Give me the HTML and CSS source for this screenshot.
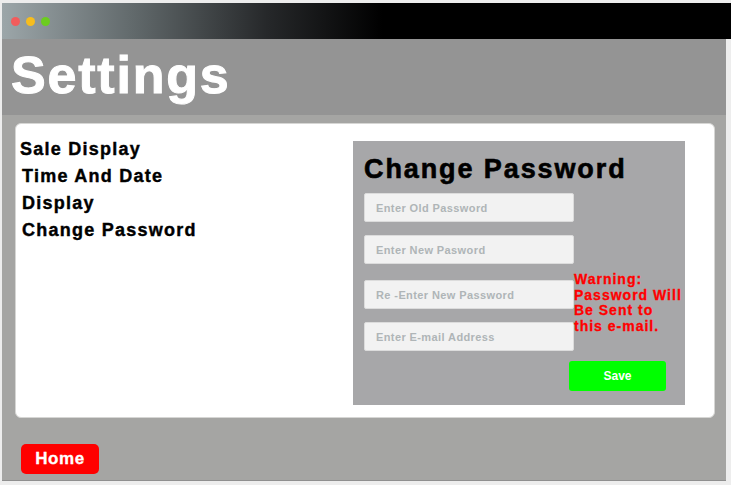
FILE: index.html
```html
<!DOCTYPE html>
<html lang="en">
<head>
<meta charset="utf-8">
<title>Settings</title>
<link rel="stylesheet" href="styles.css">
</head>
<body>
<div class="window">
  <div class="titlebar">
    <span class="dot dot-red"></span>
    <span class="dot dot-yellow"></span>
    <span class="dot dot-green"></span>
  </div>
  <div class="frame">
    <header class="header"><h1 class="title">Settings</h1></header>
    <main class="body">
      <section class="card">
        <nav class="menu">
          <a class="menu-item first">Sale Display</a>
          <a class="menu-item">Time And Date</a>
          <a class="menu-item">Display</a>
          <a class="menu-item">Change Password</a>
        </nav>
        <div class="panel">
          <h2 class="panel-title">Change Password</h2>
          <div class="form">
            <input class="field" type="password" placeholder="Enter Old Password">
            <input class="field" type="password" placeholder="Enter New Pasword">
            <input class="field field-third" type="password" placeholder="Re -Enter New Password">
            <input class="field" type="email" placeholder="Enter E-mail Address">
            <p class="warning">Warning:<br>Password Will<br>Be Sent to<br>this e-mail.</p>
            <button class="save" type="button">Save</button>
          </div>
        </div>
      </section>
      <div class="footer">
        <button class="home" type="button">Home</button>
      </div>
    </main>
  </div>
</div>
</body>
</html>
```

FILE: styles.css
```css
* { box-sizing: border-box; }

html, body {
  margin: 0;
  padding: 0;
  background: #ededed;
  font-family: "Liberation Sans", Arial, sans-serif;
}

.window {
  width: 731px;
  height: 485px;
  padding-top: 3px;
  display: flex;
  flex-direction: column;
}

.titlebar {
  height: 36px;
  margin-left: 2px;
  display: flex;
  align-items: center;
  gap: 6px;
  padding-left: 9px;
  background: linear-gradient(to right, #9ca6a9 0px, #626a6c 130px, #26282a 265px, #000 380px);
}

.dot {
  width: 9px;
  height: 9px;
  border-radius: 50%;
  display: block;
}
.dot-red { background: #f25c5c; }
.dot-yellow { background: #f6bd1e; }
.dot-green { background: #6ccd1e; }

.frame {
  width: 724px;
  margin-left: 2px;
  height: 442px;
  display: flex;
  flex-direction: column;
}

.header {
  height: 76px;
  background: #949494;
  padding: 10px 0 0 9px;
}

.title {
  margin: 0;
  color: #fff;
  font-size: 52px;
  line-height: 52px;
  font-weight: bold;
  letter-spacing: 1.8px;
  -webkit-text-stroke: 1px #fff;
}

.body {
  flex: 1;
  background: #a5a5a3;
  border-bottom: 1px solid #8f8f8f;
  padding: 8px 11px 0 13px;
  display: flex;
  flex-direction: column;
}

.card {
  height: 295px;
  background: #fff;
  border-radius: 6px;
  border: 1px solid #d6d6d4;
  display: grid;
  grid-template-columns: 1fr 332px;
  padding: 12px 29px 12px 4px;
}

.menu {
  display: flex;
  flex-direction: column;
}

.menu-item {
  font-size: 18px;
  line-height: 27px;
  font-weight: bold;
  letter-spacing: 1.25px;
  color: #000;
  padding-left: 2px;
  -webkit-text-stroke: 0.4px #000;
}
.menu-item.first { padding-left: 0; }

.panel {
  margin-top: 5px;
  background: #a7a7a9;
  padding: 12px 0 0 11px;
}

.panel-title {
  margin: 0;
  font-size: 27px;
  line-height: 32px;
  font-weight: bold;
  letter-spacing: 1.9px;
  color: #000;
  -webkit-text-stroke: 0.6px #000;
}

.form {
  margin-top: 8px;
  display: grid;
  grid-template-columns: 210px 1fr;
  row-gap: 13px;
}

.field {
  grid-column: 1;
  height: 29px;
  width: 210px;
  margin: 0;
  background: #f2f2f2;
  border: 1px solid #dcdcdc;
  border-radius: 2px;
  padding: 0 0 0 11px;
  font-family: "Liberation Sans", Arial, sans-serif;
  font-size: 11px;
  font-weight: bold;
  letter-spacing: 0.4px;
  outline: none;
}
.field::placeholder { color: #afb5b7; opacity: 1; }
.field-third { margin-top: 3px; }

.warning {
  grid-column: 2;
  grid-row: 3 / span 2;
  align-self: start;
  margin: -5px 0 0 0;
  width: 112px;
  color: #ff0000;
  font-size: 14px;
  line-height: 15.5px;
  font-weight: bold;
  letter-spacing: 1px;
  -webkit-text-stroke: 0.3px #ff0000;
}

.save {
  grid-column: 1 / span 2;
  justify-self: end;
  margin: -3px 20px 0 0;
  width: 97px;
  height: 30px;
  background: #00ff00;
  border: none;
  border-radius: 3px;
  color: #fff;
  font-family: "Liberation Sans", Arial, sans-serif;
  font-size: 12px;
  font-weight: bold;
  padding: 0;
}

.footer {
  margin-top: 26px;
  padding-left: 6px;
}

.home {
  width: 78px;
  height: 30px;
  background: #ff0000;
  border: none;
  border-radius: 5px;
  color: #fff;
  font-family: "Liberation Sans", Arial, sans-serif;
  font-size: 17px;
  font-weight: bold;
  letter-spacing: 0.6px;
  padding: 0;
  -webkit-text-stroke: 0.3px #fff;
}
```
